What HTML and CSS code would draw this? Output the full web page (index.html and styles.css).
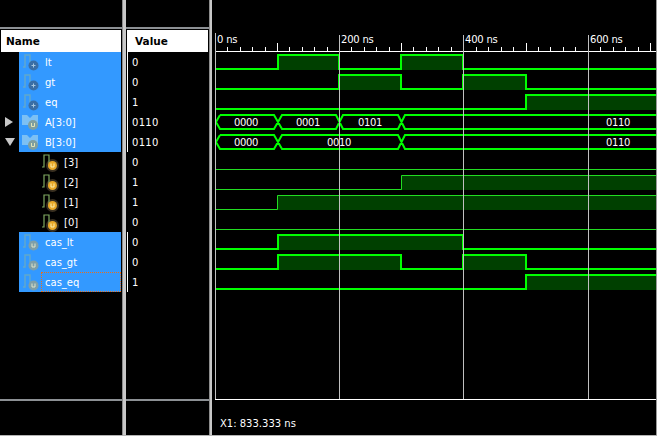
FILE: index.html
```html
<!DOCTYPE html>
<html lang="en">
<head>
<meta charset="utf-8">
<title>Waveform viewer</title>
<link rel="stylesheet" href="styles.css">
</head>
<body>
<svg class="defs" width="0" height="0" aria-hidden="true">
  <symbol id="i-in" viewBox="0 0 19 20">
    <path d="M1 15H3V3H8V15H10" fill="none" stroke="#62a8cc" stroke-width="1.400"/>
    <circle cx="11.500" cy="13.500" r="5" fill="#3a6ea5"/>
    <path d="M9.500 13.500H13.500M11.500 11.500V15.500" stroke="#a8c8e0" stroke-width="1"/>
  </symbol>
  <symbol id="i-bus" viewBox="0 0 19 20">
    <path d="M0 3H5L8 6L11 3H16V13H0Z" fill="#7cc0f4"/>
    <circle cx="11" cy="13" r="5" fill="#7f9f9f"/>
    <path d="M9.500 11V14.500H12.500V11" fill="none" stroke="#e0e4b8" stroke-width="1"/>
  </symbol>
  <symbol id="i-out" viewBox="0 0 19 20">
    <path d="M1 15H3V3H8V15H10" fill="none" stroke="#62a8cc" stroke-width="1.400"/>
    <circle cx="11.500" cy="13.500" r="5" fill="#7f9fa8"/>
    <path d="M10 11.500V15H13V11.500" fill="none" stroke="#e0e4c8" stroke-width="1"/>
  </symbol>
  <symbol id="i-bit" viewBox="0 0 19 20">
    <circle cx="11.500" cy="13.500" r="6.500" fill="#3a3020"/>
    <path d="M1 15H3V3H8V15H10" fill="none" stroke="#7fa860" stroke-width="1.200"/>
    <circle cx="11.500" cy="13.500" r="4.500" fill="#e8a828"/>
    <path d="M10 11.500V15H13V11.500" fill="none" stroke="#fff0b0" stroke-width="1"/>
  </symbol>
</svg>

<main class="app">
  <section class="pane pane-name">
    <div class="top"></div>
    <div class="rule"></div>
    <div class="head head-name">Name</div>
    <div class="rows">
      <div class="row"><span class="tog"></span><div class="cell sel"><svg class="ico"><use href="#i-in"/></svg><span class="lab">lt</span></div></div>
      <div class="row"><span class="tog"></span><div class="cell sel"><svg class="ico"><use href="#i-in"/></svg><span class="lab">gt</span></div></div>
      <div class="row"><span class="tog"></span><div class="cell sel"><svg class="ico"><use href="#i-in"/></svg><span class="lab">eq</span></div></div>
      <div class="row"><span class="tog"><i class="arrow-r"></i></span><div class="cell sel"><svg class="ico"><use href="#i-bus"/></svg><span class="lab">A[3:0]</span></div></div>
      <div class="row"><span class="tog"><i class="arrow-d"></i></span><div class="cell sel"><svg class="ico"><use href="#i-bus"/></svg><span class="lab">B[3:0]</span></div></div>
      <div class="row"><span class="tog"></span><div class="cell child"><svg class="ico"><use href="#i-bit"/></svg><span class="lab">[3]</span></div></div>
      <div class="row"><span class="tog"></span><div class="cell child"><svg class="ico"><use href="#i-bit"/></svg><span class="lab">[2]</span></div></div>
      <div class="row"><span class="tog"></span><div class="cell child"><svg class="ico"><use href="#i-bit"/></svg><span class="lab">[1]</span></div></div>
      <div class="row"><span class="tog"></span><div class="cell child"><svg class="ico"><use href="#i-bit"/></svg><span class="lab">[0]</span></div></div>
      <div class="row"><span class="tog"></span><div class="cell sel"><svg class="ico"><use href="#i-out"/></svg><span class="lab">cas_lt</span></div></div>
      <div class="row"><span class="tog"></span><div class="cell sel"><svg class="ico"><use href="#i-out"/></svg><span class="lab">cas_gt</span></div></div>
      <div class="row"><span class="tog"></span><div class="cell sel"><svg class="ico"><use href="#i-out"/></svg><span class="lab focus">cas_eq</span></div></div>
    </div>
    <div class="rule"></div>
    <div class="foot"></div>
  </section>

  <div class="split"></div>

  <section class="pane pane-value">
    <div class="top"></div>
    <div class="rule"></div>
    <div class="head head-value">Value</div>
    <div class="rows">
      <div class="val sel-val">0</div>
      <div class="val sel-val">0</div>
      <div class="val sel-val">1</div>
      <div class="val sel-val">0110</div>
      <div class="val sel-val">0110</div>
      <div class="val">0</div>
      <div class="val">1</div>
      <div class="val">1</div>
      <div class="val">0</div>
      <div class="val sel-val">0</div>
      <div class="val sel-val">0</div>
      <div class="val sel-val">1</div>
    </div>
    <div class="rule"></div>
    <div class="foot"></div>
  </section>

  <div class="split split-b"></div>

  <section class="pane pane-wave">
    <svg class="wave" viewBox="212 0 444 400" width="444" height="400">
      <!-- ruler -->
      <path class="tick" d="M227.500 47V51M240.500 47V51M252.500 47V51M265.500 47V51M277.500 43V51M289.500 47V51M302.500 47V51M314.500 47V51M327.500 47V51M351.500 47V51M364.500 47V51M376.500 47V51M389.500 47V51M401.500 43V51M413.500 47V51M426.500 47V51M438.500 47V51M451.500 47V51M476.500 47V51M488.500 47V51M501.500 47V51M513.500 47V51M526.500 43V51M538.500 47V51M550.500 47V51M563.500 47V51M575.500 47V51M600.500 47V51M613.500 47V51M625.500 47V51M638.500 47V51M650.500 43V51"/>
      <path class="tick" d="M215 51.500H656"/>
      <text class="t" x="217" y="43">0 ns</text>
      <text class="t" x="341" y="43">200 ns</text>
      <text class="t" x="465" y="43">400 ns</text>
      <text class="t" x="590" y="43">600 ns</text>

      <!-- fills -->
      <path class="fill" d="M278 55H339V70H278ZM401 55H463V70H401Z"/>
      <path class="fill" d="M339 75H401V90H339ZM463 75H526V90H463Z"/>
      <path class="fill" d="M526 95H656V110H526Z"/>
      <path class="fill" d="M401 175H656V190H401Z"/>
      <path class="fill" d="M277 195H656V210H277Z"/>
      <path class="fill" d="M278 235H463V250H278Z"/>
      <path class="fill" d="M278 255H401V270H278ZM463 255H526V270H463Z"/>
      <path class="fill" d="M526 275H656V290H526Z"/>

      <!-- single-bit traces -->
      <path class="w" d="M216 69H278V55H339V69H401V55H463V69H656"/>
      <path class="w" d="M216 89H339V75H401V89H463V75H526V89H656"/>
      <path class="w" d="M216 109H526V95H656"/>
      <path class="w" d="M216 249H278V235H463V249H656"/>
      <path class="w" d="M216 269H278V255H401V269H463V255H526V269H656"/>
      <path class="w" d="M216 289H526V275H656"/>
      <path class="thin" d="M216 169.500H656"/>
      <path class="thin" d="M216 189.500H401.500V175.500H656"/>
      <path class="thin" d="M216 209.500H277.500V195.500H656"/>
      <path class="thin" d="M216 229.500H656"/>

      <!-- buses -->
      <path class="w" d="M220 115L216 122L220 129H274L282 115H336L343 129H398L405 115H656M220 115H274L282 129H336L343 115H398L405 129H656"/>
      <path class="w" d="M220 135L216 142L220 149H274L282 135H398L405 149H656M220 135H274L282 149H398L405 135H656"/>

      <!-- cursors -->
      <path class="cur" d="M215.500 33V399M339.500 35V399M463.500 35V399M588.500 35V399"/>
      <path class="tick" d="M215 399.500H656"/>

      <text class="t bus" x="246" y="126">0000</text>
      <text class="t bus" x="308" y="126">0001</text>
      <text class="t bus" x="370" y="126">0101</text>
      <text class="t bus" x="618" y="126">0110</text>
      <text class="t bus" x="246" y="146">0000</text>
      <text class="t bus" x="339" y="146">0010</text>
      <text class="t bus" x="618" y="146">0110</text>
    </svg>
    <div class="status">X1: 833.333 ns</div>
  </section>
</main>
</body>
</html>
```
FILE: styles.css
```css
html, body {
  margin: 0;
  padding: 0;
  background: #000;
}

.defs {
  position: absolute;
}

.app {
  display: flex;
  width: 657px;
  height: 436px;
  box-sizing: border-box;
  border-bottom: 1px solid #b4b4b4;
  background: #000;
  color: #fff;
  font: 10px "DejaVu Sans", sans-serif;
  overflow: hidden;
}

.pane {
  display: flex;
  flex-direction: column;
  background: #000;
}

.pane-name { width: 122px; }
.pane-value { width: 83px; }
.pane-wave { flex: 1; border-right: 1px solid #9a9a9a; }

.split {
  width: 4px;
  background: #c8c8c8;
  border-left: 1px solid #8c8c8c;
  box-sizing: border-box;
}

.split-b { width: 3px; }

.top { height: 27px; }

.rule {
  height: 2px;
  background: #8c9094;
}

.head {
  height: 22px;
  margin-top: 1px;
  display: flex;
  align-items: center;
  background: #fff;
  color: #000;
  font-weight: 700;
  font-size: 10.500px;
}

.head-name { margin-left: 1px; margin-right: 1px; padding-left: 5px; }
.head-value { margin-left: 1px; margin-right: 1px; padding-left: 8px; }

.rows {
  flex: 1;
  min-height: 0;
}

.row {
  display: flex;
  height: 20px;
}

.tog {
  width: 19px;
  flex: none;
  display: flex;
  align-items: center;
  padding-left: 5px;
  box-sizing: border-box;
}

.arrow-r {
  width: 0;
  height: 0;
  border-left: 8px solid #c8c8c8;
  border-top: 5px solid transparent;
  border-bottom: 5px solid transparent;
}

.arrow-d {
  width: 0;
  height: 0;
  border-top: 8px solid #c8c8c8;
  border-left: 5px solid transparent;
  border-right: 5px solid transparent;
}

.cell {
  flex: 1;
  display: flex;
  align-items: stretch;
  padding-left: 3px;
  margin-right: 1px;
}

.cell.sel { background: #3399ff; }
.cell.child { padding-left: 22px; }

.ico {
  width: 19px;
  height: 20px;
  flex: none;
}

.lab {
  flex: 1;
  display: flex;
  align-items: center;
  padding-left: 3px;
  border: 1px solid transparent;
  box-sizing: border-box;
  white-space: nowrap;
}

.lab.focus { border: 1px dotted #e8701a; }

.foot { height: 34px; }

.val {
  height: 20px;
  box-sizing: border-box;
  margin-left: 1px;
  padding-left: 5px;
  display: flex;
  align-items: center;
  letter-spacing: 0.3px;
}

.sel-val {
  border-left: 1px solid #fff;
  padding-left: 4px;
}

.wave {
  display: block;
  flex: none;
}

.tick { stroke: #fff; stroke-width: 1; fill: none; }
.cur { stroke: #c0c0c0; stroke-width: 1; fill: none; }
.fill { fill: #004000; }
.w { stroke: #00ff00; stroke-width: 2; fill: none; }
.thin { stroke: #22dd22; stroke-width: 1; fill: none; }

.t {
  fill: #fff;
  font: 10px "DejaVu Sans", sans-serif;
  letter-spacing: -0.2px;
}

.bus { text-anchor: middle; letter-spacing: -0.3px; }

.status {
  padding: 18px 0 0 8px;
  white-space: nowrap;
}
```
